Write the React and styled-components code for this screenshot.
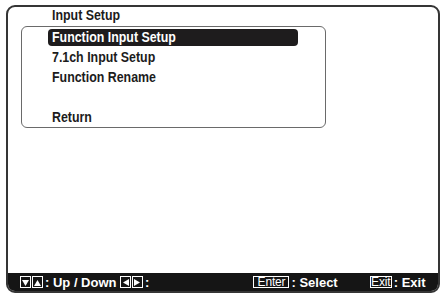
import React from "react";
import styled, { createGlobalStyle } from "styled-components";

const Global = createGlobalStyle`
  html, body { margin: 0; padding: 0; background: #ffffff; }
  body { font-family: "Liberation Sans", Arial, sans-serif; }
`;

const Screen = styled.div`
  width: 442px;
  height: 295px;
  padding: 5px 2px 2px 6px;
  box-sizing: border-box;
  background: #fff;
`;

const Frame = styled.div`
  width: 434px;
  height: 288px;
  box-sizing: border-box;
  border: 2px solid #353535;
  border-radius: 9px;
  display: flex;
  flex-direction: column;
  overflow: hidden;
`;

const Narrow = styled.span`
  display: inline-block;
  transform: scaleX(0.885);
  transform-origin: left center;
  white-space: pre;
`;

const Title = styled.div`
  height: 16px;
  line-height: 16px;
  padding-left: 44px;
  font-weight: bold;
  font-size: 14px;
  color: #1c1c1c;
`;

const MenuBox = styled.div`
  margin: 3px 0 0 13px;
  width: 305px;
  box-sizing: border-box;
  border: 1px solid #6a6a6a;
  border-radius: 6px;
  display: flex;
  flex-direction: column;
`;

const Row = styled.div`
  height: 20px;
  display: flex;
  align-items: center;
  padding-left: 26px;
`;

const Item = styled.span`
  display: inline-block;
  width: 250px;
  height: 17px;
  line-height: 17px;
  box-sizing: border-box;
  padding-left: 4px;
  border-radius: 4px;
  font-weight: bold;
  font-size: 14px;
  color: ${(p) => (p.$selected ? "#ffffff" : "#1c1c1c")};
  background: ${(p) => (p.$selected ? "#1e1c1d" : "transparent")};
`;

const Spacer = styled.div`
  flex: 1;
`;

const Footer = styled.div`
  height: 18px;
  background: #151515;
  color: #ffffff;
  display: flex;
  align-items: center;
  padding-left: 12px;
  font-weight: bold;
  font-size: 13px;
`;

const Group = styled.div`
  display: flex;
  align-items: center;
  margin-left: ${(p) => p.$ml || 0}px;
`;

const KeyBox = styled.span`
  display: inline-flex;
  align-items: center;
  justify-content: center;
  width: ${(p) => p.$w || 11}px;
  height: 12px;
  box-sizing: border-box;
  border: 1px solid #ffffff;
  margin-right: 1px;
  font-size: 12px;
  line-height: 11px;
  font-weight: normal;
  letter-spacing: -0.2px;
`;

const Label = styled.span`
  margin-left: 1px;
  white-space: pre;
`;

const Tri = ({ dir }) => {
  const pts = {
    down: "1,2 8,2 4.5,8",
    up: "1,8 8,8 4.5,2",
    left: "8,1 8,8 2,4.5",
    right: "1,1 1,8 7,4.5",
  }[dir];
  return (
    <svg width="9" height="9" viewBox="0 0 9 9">
      <polygon points={pts} fill="#ffffff" />
    </svg>
  );
};

const items = [
  { label: "Function Input Setup", selected: true },
  { label: "7.1ch Input Setup" },
  { label: "Function Rename" },
  { label: "" },
  { label: "Return" },
];

export default function App() {
  return (
    <>
      <Global />
      <Screen>
        <Frame>
          <Title>
            <Narrow>Input Setup</Narrow>
          </Title>
          <MenuBox>
            {items.map((it, i) => (
              <Row key={i}>
                <Item $selected={it.selected}>
                  <Narrow>{it.label}</Narrow>
                </Item>
              </Row>
            ))}
          </MenuBox>
          <Spacer />
          <Footer>
            <Group>
              <KeyBox><Tri dir="down" /></KeyBox>
              <KeyBox><Tri dir="up" /></KeyBox>
              <Label>: Up / Down </Label>
              <KeyBox><Tri dir="left" /></KeyBox>
              <KeyBox><Tri dir="right" /></KeyBox>
              <Label>:</Label>
            </Group>
            <Group $ml={104}>
              <KeyBox $w={36}>Enter</KeyBox>
              <Label>: Select</Label>
            </Group>
            <Group $ml={32}>
              <KeyBox $w={22}>Exit</KeyBox>
              <Label>: Exit</Label>
            </Group>
          </Footer>
        </Frame>
      </Screen>
    </>
  );
}
